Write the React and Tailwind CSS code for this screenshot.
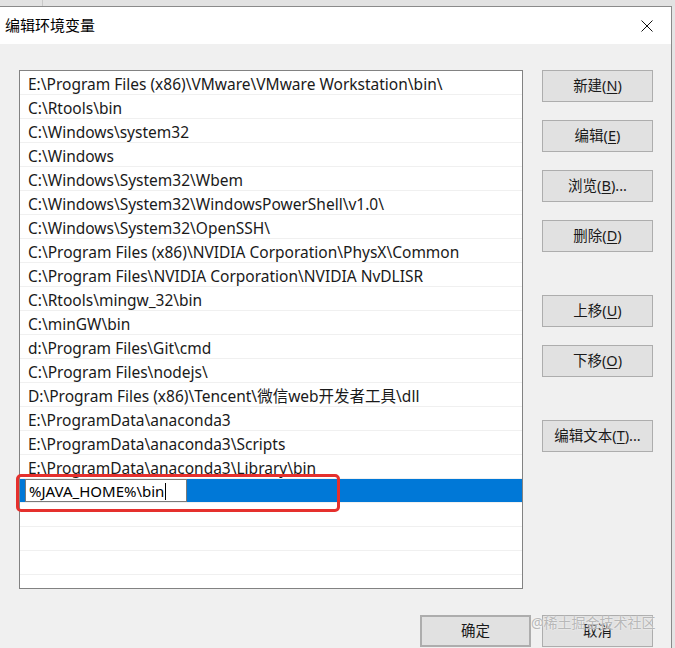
import React from "react";

const rows = [
  "E:\\Program Files (x86)\\VMware\\VMware Workstation\\bin\\",
  "C:\\Rtools\\bin",
  "C:\\Windows\\system32",
  "C:\\Windows",
  "C:\\Windows\\System32\\Wbem",
  "C:\\Windows\\System32\\WindowsPowerShell\\v1.0\\",
  "C:\\Windows\\System32\\OpenSSH\\",
  "C:\\Program Files (x86)\\NVIDIA Corporation\\PhysX\\Common",
  "C:\\Program Files\\NVIDIA Corporation\\NVIDIA NvDLISR",
  "C:\\Rtools\\mingw_32\\bin",
  "C:\\minGW\\bin",
  "d:\\Program Files\\Git\\cmd",
  "C:\\Program Files\\nodejs\\",
  "D:\\Program Files (x86)\\Tencent\\微信web开发者工具\\dll",
  "E:\\ProgramData\\anaconda3",
  "E:\\ProgramData\\anaconda3\\Scripts",
  "E:\\ProgramData\\anaconda3\\Library\\bin",
];

function Btn({ children, className = "" }) {
  return (
    <div
      className={
        "flex h-[32px] w-[111px] items-center justify-center border border-[#adadad] bg-[#e1e1e1] text-[14.5px] text-[#1a1a1a] " +
        className
      }
    >
      {children}
    </div>
  );
}

function U({ children }) {
  return <span className="underline underline-offset-2 decoration-1">{children}</span>;
}

export default function App() {
  return (
    <div
      className="relative h-[648px] w-[675px] overflow-hidden bg-[#e4e4e4]"
      style={{ fontFamily: '"Noto Sans", "Noto Sans CJK SC", sans-serif' }}
    >
      <div className="flex h-[6px] bg-[#e2e2e2]">
        <div className="ml-[42px] w-px bg-[#c8c8c8]" />
      </div>
      <div className="flex h-[642px] w-[672px] flex-col border-r border-t border-[#8a8a8a] bg-[#f0f0f0]">
        <div className="flex h-[37px] shrink-0 items-center justify-between bg-white pl-[5px] pr-[18px]">
          <span className="text-[15px] text-black">编辑环境变量</span>
          <svg width="12" height="12" viewBox="0 0 12 12">
            <path d="M0.5 0.5 L11.5 11.5 M11.5 0.5 L0.5 11.5" stroke="#111" strokeWidth="1" />
          </svg>
        </div>
        <div className="flex flex-col pl-[19px] pt-[26px]">
          <div className="flex gap-[19px]">
            <div className="relative h-[519px] w-[504px] overflow-hidden border border-[#828282] bg-white">
              {rows.map((r, i) => (
                <div
                  key={i}
                  className="flex h-[24px] items-center border-b border-[#f0f0f0] pl-[8px] pt-[3px] text-[15.5px] leading-[18px] text-[#1a1a1a] whitespace-nowrap"
                >
                  {r}
                </div>
              ))}
              <div className="flex h-[24px] items-center border-b border-[#f0f0f0] bg-[#0078d7] pl-[5px]">
                <div className="flex h-[23px] w-[162px] items-center border border-[#7a7a7a] bg-white pl-[3px] pt-px text-[15px] text-black">
                  %JAVA_HOME%\bin
                  <span className="ml-[1px] inline-block h-[17px] w-px bg-black" />
                </div>
              </div>
              {[0, 1, 2, 3].map((i) => (
                <div key={i} className="h-[24px] border-b border-[#f0f0f0]" />
              ))}
            </div>
            <div className="flex flex-col">
              <Btn>新建(<U>N</U>)</Btn>
              <Btn className="mt-[18px]">编辑(<U>E</U>)</Btn>
              <Btn className="mt-[18px]">浏览(<U>B</U>)...</Btn>
              <Btn className="mt-[18px]">删除(<U>D</U>)</Btn>
              <Btn className="mt-[43px]">上移(<U>U</U>)</Btn>
              <Btn className="mt-[18px]">下移(<U>O</U>)</Btn>
              <Btn className="mt-[43px]">编辑文本(<U>T</U>)...</Btn>
            </div>
          </div>
          <div className="mt-[26px] flex justify-end gap-[11px] pr-[18px]">
            <Btn className="border-2 border-[#0078d7]">确定</Btn>
            <Btn>取消</Btn>
          </div>
        </div>
      </div>
      <div className="pointer-events-none absolute left-[16px] top-[474px] h-[38px] w-[324px] rounded-[5px] border-[3px] border-[#e5302d]" />
      <div className="pointer-events-none absolute left-[531px] top-[612px] text-[14px] text-[#b8b8b8]" style={{ textShadow: "0 0 2px #fff" }}>
        @稀土掘金技术社区
      </div>
    </div>
  );
}
